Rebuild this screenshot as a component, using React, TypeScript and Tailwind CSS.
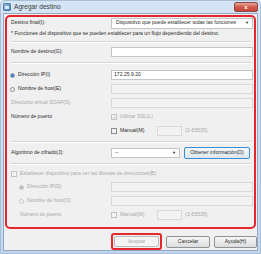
import React from "react";

const txt = "text-[5.1px] leading-none text-[#2a2a2a] whitespace-nowrap";
const dis = "text-[5.1px] leading-none text-[#a8a8a8] whitespace-nowrap";

function Input({ value, disabled, className = "" }: { value?: string; disabled?: boolean; className?: string }) {
  return (
    <div
      className={`h-[10px] border flex items-center px-[2px] ${
        disabled ? "bg-[#f2f2f2] border-[#d9d9d9]" : "bg-white border-[#c2c5ca]"
      } ${className}`}
    >
      {value && <span className={txt}>{value}</span>}
    </div>
  );
}

function Radio({ checked, disabled }: { checked?: boolean; disabled?: boolean }) {
  return (
    <div
      className={`w-[5px] h-[5px] rounded-full border flex items-center justify-center ${
        disabled ? "border-[#c4c4c4] bg-[#f4f4f4]" : "border-[#8a8f96] bg-[#f6f6f6]"
      }`}
    >
      {checked && <div className={`w-[3px] h-[3px] rounded-full ${disabled ? "bg-[#b4b4b4]" : "bg-[#3579c8]"}`} />}
    </div>
  );
}

function Check({ checked, disabled }: { checked?: boolean; disabled?: boolean }) {
  return (
    <div
      className={`w-[6px] h-[6px] border flex items-center justify-center ${
        disabled ? "border-[#c4c4c4] bg-[#f4f4f4]" : "border-[#8a8f96] bg-[#f2f2f2]"
      }`}
    >
      {checked && (
        <svg width="5" height="5" viewBox="0 0 5 5">
          <path d="M0.8 2.6 L2 3.8 L4.3 1" stroke={disabled ? "#b0b0b0" : "#333"} strokeWidth="0.8" fill="none" />
        </svg>
      )}
    </div>
  );
}

function Sep({ h }: { h: number }) {
  return (
    <div className={`flex flex-col justify-center pl-[1px] pr-[2px] ${h === 10 ? "h-[10px]" : "h-[8px]"}`}>
      <div className="h-px bg-[#d6d6d6]" />
      <div className="h-px bg-white" />
    </div>
  );
}

function Btn({ label, disabled, focused, tall }: { label: string; disabled?: boolean; focused?: boolean; tall?: boolean }) {
  return (
    <div
      className={`${tall ? "h-[12px]" : "h-[11px]"} rounded-[2px] border flex items-center justify-center ${
        disabled
          ? "border-[#b8bcc0] bg-[#f4f4f4]"
          : focused
          ? "border-[#3d8ed0] bg-gradient-to-b from-[#f4f8fb] to-[#dde6ee]"
          : "border-[#8f9398] bg-gradient-to-b from-[#f6f6f6] to-[#dcdcdc]"
      }`}
    >
      <span className={disabled ? dis : txt}>{label}</span>
    </div>
  );
}

export default function App() {
  return (
    <div className="w-[261px] h-[254px] bg-gradient-to-b from-[#d6e5f5] to-[#c2d7ee] flex flex-col overflow-hidden border border-[#a9bfd8] rounded-t-[4px] font-['Liberation_Sans',Arial,sans-serif]">
      {/* Title bar */}
      <div className="h-[12px] flex items-center pl-[2px] pr-[2px] shrink-0">
        <div className="w-[8px] h-[8px] rounded-[1px] bg-gradient-to-br from-[#8fc1ec] to-[#3a78b8] border border-[#5b7fa6] flex items-center justify-center">
          <div className="w-[4px] h-[3px] bg-white/80" />
        </div>
        <span className="ml-[3px] text-[6.6px] leading-none text-[#3a3a3a] whitespace-nowrap">Agregar destino</span>
        <div className="ml-auto w-[24px] h-[10px] rounded-[2px] border border-[#8a4a48] bg-gradient-to-b from-[#e8a79b] via-[#d0594a] to-[#c8463b] flex items-center justify-center">
          <span className="text-[6px] leading-none text-white font-bold">x</span>
        </div>
      </div>

      {/* Body */}
      <div className="flex-1 mx-[2px] mb-[2px] bg-[#f0f0f0] flex flex-col border border-[#93a9c3]">
        <div className="mt-[1px] mx-[1px] h-[214px] border-2 border-[#e5262c] rounded-[5px] flex flex-col pl-[3px] pr-[1px]">
          {/* Destino final */}
          <div className="h-[12px] flex items-center">
            <span className={`${txt} w-[101px] pl-[1px]`}>Destino final(I):</span>
            <div className="flex-1 h-[11px] border border-[#c2c5ca] bg-white flex items-center pl-[4px] pr-[3px]">
              <span className={txt}>Dispositivo que puede establecer todas las funciones</span>
              <span className="ml-auto text-[4px] leading-none text-[#222]">▼</span>
            </div>
          </div>
          <div className="h-[9px] flex items-center pl-[1px]">
            <span className={txt}>* Funciones del dispositivo que se pueden establecer para un flujo dependiendo del destino.</span>
          </div>
          <Sep h={8} />
          {/* Nombre de destino */}
          <div className="h-[12px] flex items-center">
            <span className={`${txt} w-[101px] pl-[1px]`}>Nombre de destino(G):</span>
            <Input className="flex-1" />
          </div>
          <Sep h={10} />
          {/* Direccion IP */}
          <div className="h-[14px] flex items-center">
            <div className="w-[101px] flex items-center gap-[3px]">
              <Radio checked />
              <span className={txt}>Dirección IP(I)</span>
            </div>
            <Input className="flex-1" value="172.25.9.20" />
          </div>
          <div className="h-[14px] flex items-center">
            <div className="w-[101px] flex items-center gap-[3px]">
              <Radio />
              <span className={txt}>Nombre de host(E)</span>
            </div>
            <Input className="flex-1" disabled />
          </div>
          <div className="h-[14px] flex items-center">
            <span className={`${dis} w-[101px] pl-[1px]`}>Directorio virtual SOAP(S)</span>
            <Input className="flex-1" disabled />
          </div>
          <div className="h-[14px] flex items-center">
            <span className={`${txt} w-[101px] pl-[1px]`}>Número de puerto</span>
            <div className="flex items-center gap-[3px]">
              <Check checked disabled />
              <span className={dis}>Utilizar SSL(L)</span>
            </div>
          </div>
          <div className="h-[14px] flex items-center">
            <div className="w-[101px]" />
            <div className="flex items-center gap-[3px]">
              <Check />
              <span className={txt}>Manual(M)</span>
            </div>
            <Input className="ml-[13px] w-[25px]" disabled />
            <span className={`${dis} ml-[3px]`}>(1-65535)</span>
          </div>
          <Sep h={8} />
          {/* Algoritmo */}
          <div className="h-[14px] flex items-center">
            <span className={`${txt} w-[101px] pl-[1px]`}>Algoritmo de cifrado(J):</span>
            <div className="w-[69px] h-[10px] border border-[#c2c5ca] bg-white flex items-center pl-[3px] pr-[3px]">
              <span className={txt}>--</span>
              <span className="ml-auto text-[4px] leading-none text-[#222]">▼</span>
            </div>
            <div className="ml-[4px] w-[66px]">
              <Btn label="Obtener información(O)" focused tall />
            </div>
          </div>
          <Sep h={8} />
          {/* Establecer */}
          <div className="h-[12px] flex items-center gap-[3px] pl-[1px]">
            <Check disabled />
            <span className={dis}>Establecer dispositivo para ver las libretas de direcciones(B)</span>
          </div>
          <div className="h-[14px] flex items-center">
            <div className="w-[101px] flex items-center gap-[3px] pl-[9px]">
              <Radio checked disabled />
              <span className={dis}>Dirección IP(D)</span>
            </div>
            <Input className="flex-1" disabled />
          </div>
          <div className="h-[14px] flex items-center">
            <div className="w-[101px] flex items-center gap-[3px] pl-[9px]">
              <Radio disabled />
              <span className={dis}>Nombre de host(O)</span>
            </div>
            <Input className="flex-1" disabled />
          </div>
          <div className="h-[14px] flex items-center">
            <span className={`${dis} w-[101px] pl-[10px]`}>Número de puerto</span>
            <div className="flex items-center gap-[3px]">
              <Check disabled />
              <span className={dis}>Manual(M)</span>
            </div>
            <Input className="ml-[13px] w-[25px]" disabled />
            <span className={`${dis} ml-[3px]`}>(1-65535)</span>
          </div>
        </div>

        {/* Buttons */}
        <div className="flex items-center justify-end gap-[4px] mt-[4px] pr-0">
          <div className="border-2 border-[#e5262c] rounded-[3px] p-[1px] w-[51px]">
            <Btn label="Aceptar" disabled />
          </div>
          <div className="w-[44px]">
            <Btn label="Cancelar" tall />
          </div>
          <div className="w-[43px]">
            <Btn label="Ayuda(H)" tall />
          </div>
        </div>
      </div>
    </div>
  );
}
